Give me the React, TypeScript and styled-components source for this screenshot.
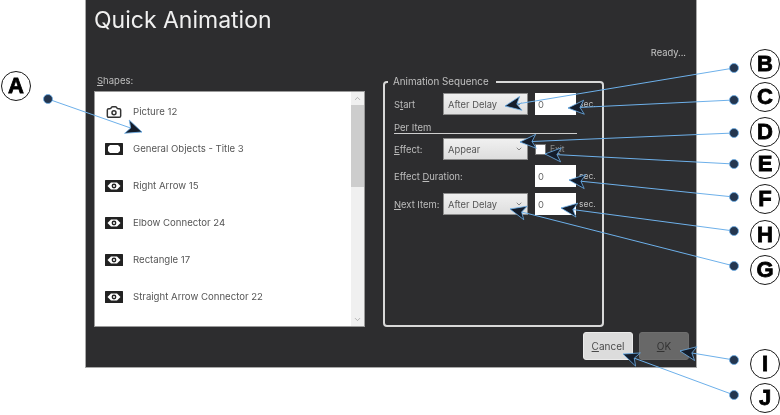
import React from 'react'
import styled, { createGlobalStyle } from 'styled-components'
import { ChevronDown, ChevronUp, Camera } from 'lucide-react'

const GlobalStyle = createGlobalStyle`
  html, body {
    margin: 0;
    padding: 0;
    background: #ffffff;
  }
  body {
    font-family: "Inter", "Liberation Sans", sans-serif;
  }
`

const Page = styled.div`
  position: relative;
  width: 780px;
  height: 415px;
  overflow: hidden;
  background: #ffffff;
  padding-left: 85px;
  box-sizing: border-box;
  filter: blur(0.4px);
`

const Dialog = styled.div`
  width: 612px;
  height: 368px;
  box-sizing: border-box;
  padding: 0 7px 7px 8px;
  display: flex;
  flex-direction: column;
  background: #2d2d2f;
  border: 1px solid #a9a9a9;
  border-top: none;
  color: #d0d0d0;
`

const Title = styled.h1`
  margin: 7px 0 0;
  font-size: 23px;
  line-height: 26px;
  font-weight: 400;
  color: #f0f0f0;
`

const Status = styled.div`
  align-self: flex-end;
  margin: 14px 3px 0 0;
  font-size: 9.3px;
  line-height: 11px;
  color: #c4c4c4;
`

const Columns = styled.div`
  display: flex;
  justify-content: space-between;
  align-items: flex-start;
  margin-top: 17px;
`

const LeftColumn = styled.div`
  width: 271px;
`

const SmallLabel = styled.div`
  padding-left: 3px;
  font-size: 9.5px;
  line-height: 12px;
  color: #bdbdbd;
  margin-bottom: 4px;
  u { text-underline-offset: 1px; }
`

const ListBox = styled.div`
  display: flex;
  height: 236px;
  box-sizing: border-box;
  background: #ffffff;
  border: 1px solid #9a9a9a;
`

const Rows = styled.ul`
  flex: 1;
  margin: 0;
  padding: 1px 0 0;
  list-style: none;
`

const Row = styled.li`
  height: 37px;
  display: flex;
  align-items: center;
  gap: 10px;
  padding-left: 10px;
  font-size: 9.6px;
  color: #555555;
`

const IconSlot = styled.span`
  width: 18px;
  display: flex;
  justify-content: center;
  color: #333333;
`

const Scrollbar = styled.div`
  width: 13px;
  display: flex;
  flex-direction: column;
  align-items: center;
  background: #f0f0f0;
  color: #a0a0a0;
`

const ScrollArrow = styled.div`
  height: 13px;
  display: flex;
  align-items: center;
  justify-content: center;
`

const ScrollThumb = styled.div`
  width: 100%;
  height: 82px;
  background: #cdcdcd;
`

const ScrollTrack = styled.div`
  flex: 1;
`

const GroupBox = styled.fieldset`
  width: 221px;
  min-width: 0;
  height: 251px;
  box-sizing: border-box;
  margin: 1px 85px 0 0;
  padding: 0 0 0 9px;
  border: 2px solid #d8d8d8;
  border-radius: 4px;
`

const GroupLegend = styled.legend`
  margin-left: -6px;
  padding: 0 7px 0 5px;
  font-size: 9.8px;
  line-height: 11px;
  color: #c0c0c0;
`

const FormRow = styled.div<{ $top: number }>`
  display: flex;
  align-items: center;
  margin-top: ${(p) => p.$top}px;
  height: 22px;
  font-size: 9.4px;
  color: #bdbdbd;
  u { text-underline-offset: 1px; }
`

const FieldLabel = styled.span<{ $width: number }>`
  width: ${(p) => p.$width}px;
  flex: none;
`

const Select = styled.div`
  width: 85px;
  height: 22px;
  box-sizing: border-box;
  flex: none;
  display: flex;
  align-items: center;
  justify-content: space-between;
  padding: 0 4px 0 4px;
  background: linear-gradient(#f0f0f0, #dedede);
  border: 1px solid #8c8c8c;
  font-size: 9.4px;
  color: #555555;
`

const NumberField = styled.div`
  width: 41px;
  height: 22px;
  box-sizing: border-box;
  flex: none;
  margin-left: 7px;
  padding-left: 3px;
  display: flex;
  align-items: center;
  background: #ffffff;
  font-size: 9.4px;
  color: #666666;
`

const Unit = styled.span`
  margin-left: 3px;
  font-size: 8.5px;
`

const SectionTitle = styled.div`
  width: 183px;
  margin-top: 7px;
  border-bottom: 1.5px solid #cfcfcf;
  font-size: 9.5px;
  line-height: 11px;
  color: #bdbdbd;
`

const CheckBox = styled.span`
  width: 11px;
  height: 11px;
  flex: none;
  margin-left: 7px;
  background: #ffffff;
  border: 1px solid #777777;
  box-sizing: border-box;
`

const CheckLabel = styled.span`
  margin-left: 4px;
  font-size: 8.5px;
  color: #8a8a8a;
`

const Footer = styled.div`
  margin-top: auto;
  display: flex;
  justify-content: flex-end;
  gap: 6px;
`

const Button = styled.div<{ $disabled?: boolean }>`
  width: 50px;
  height: 28px;
  display: flex;
  align-items: center;
  justify-content: center;
  border-radius: 3px;
  font-size: 10px;
  background: ${(p) => (p.$disabled ? '#686868' : '#dcdcdc')};
  border: 1px solid ${(p) => (p.$disabled ? '#6e6e6e' : '#ebebeb')};
  box-sizing: border-box;
  color: ${(p) => (p.$disabled ? '#333333' : '#4a4a4a')};
  u { text-underline-offset: 1px; }
`

const Overlay = styled.svg`
  position: absolute;
  inset: 0;
  pointer-events: none;
`

const Badge = styled.div<{ $x: number; $y: number }>`
  position: absolute;
  left: ${(p) => p.$x - 15}px;
  top: ${(p) => p.$y - 15}px;
  width: 30px;
  height: 30px;
  box-sizing: border-box;
  display: flex;
  align-items: center;
  justify-content: center;
  background: #ffffff;
  border: 1.5px solid #1a1a1a;
  border-radius: 50%;
  font-family: "Liberation Sans", sans-serif;
  font-size: 22px;
  font-weight: 700;
  -webkit-text-stroke: 0.8px #000000;
  color: #000000;
`

const EyeIcon = () => (
  <svg width="18" height="12" viewBox="0 0 18 12">
    <rect width="18" height="12" rx="0.5" fill="#222222" />
    <path d="M2.5 6 L6 2.5 H12 L15.5 6 L12 9.5 H6 Z" fill="#ffffff" />
    <circle cx="9" cy="6" r="2.4" fill="#222222" />
    <circle cx="9" cy="6" r="1" fill="#ffffff" />
  </svg>
)

const FrameIcon = () => (
  <svg width="18" height="12" viewBox="0 0 18 12">
    <rect width="18" height="12" rx="0.5" fill="#222222" />
    <path d="M3 4 L5 2 H13 L15 4 V8 L13 10 H5 L3 8 Z" fill="#ffffff" />
  </svg>
)

const shapes = [
  { name: 'Picture 12', icon: <Camera size={16} strokeWidth={2.2} /> },
  { name: 'General Objects - Title 3', icon: <FrameIcon /> },
  { name: 'Right Arrow 15', icon: <EyeIcon /> },
  { name: 'Elbow Connector 24', icon: <EyeIcon /> },
  { name: 'Rectangle 17', icon: <EyeIcon /> },
  { name: 'Straight Arrow Connector 22', icon: <EyeIcon /> },
]

// callouts: dot position, arrow tip, letter badge
const callouts = [
  { id: 'A', dot: [48, 99], tip: [142, 132], badge: [16, 86] },
  { id: 'B', dot: [734, 68], tip: [505, 106], badge: [765, 64] },
  { id: 'C', dot: [734, 100], tip: [568, 108], badge: [765, 97] },
  { id: 'D', dot: [734, 133], tip: [520, 142], badge: [765, 132] },
  { id: 'E', dot: [734, 164], tip: [545, 154], badge: [765, 164] },
  { id: 'F', dot: [734, 197], tip: [569, 180], badge: [765, 199] },
  { id: 'H', dot: [734, 231], tip: [561, 208], badge: [765, 235] },
  { id: 'G', dot: [734, 266], tip: [510, 209], badge: [765, 270] },
  { id: 'I', dot: [734, 360], tip: [680, 351], badge: [765, 364] },
  { id: 'J', dot: [734, 395], tip: [623, 354], badge: [765, 398] },
]

const arrowHead = (dot: number[], tip: number[]) => {
  const dx = dot[0] - tip[0]
  const dy = dot[1] - tip[1]
  const len = Math.hypot(dx, dy)
  const ux = dx / len
  const uy = dy / len
  const at = (along: number, side: number) =>
    `${tip[0] + ux * along - uy * side},${tip[1] + uy * along + ux * side}`
  return [at(0, 0), at(16, 7), at(12, 0), at(16, -7)].join(' ')
}

const App = () => (
  <Page>
    <GlobalStyle />
    <Dialog>
      <Title>Quick Animation</Title>
      <Status>Ready...</Status>
      <Columns>
        <LeftColumn>
          <SmallLabel>
            <u>S</u>hapes:
          </SmallLabel>
          <ListBox>
            <Rows>
              {shapes.map((s) => (
                <Row key={s.name}>
                  <IconSlot>{s.icon}</IconSlot>
                  {s.name}
                </Row>
              ))}
            </Rows>
            <Scrollbar>
              <ScrollArrow>
                <ChevronUp size={9} />
              </ScrollArrow>
              <ScrollThumb />
              <ScrollTrack />
              <ScrollArrow>
                <ChevronDown size={9} />
              </ScrollArrow>
            </Scrollbar>
          </ListBox>
        </LeftColumn>
        <GroupBox>
          <GroupLegend>Animation Sequence</GroupLegend>
          <FormRow $top={6}>
            <FieldLabel $width={49}>
              S<u>t</u>art
            </FieldLabel>
            <Select>
              After Delay
              <ChevronDown size={8} />
            </Select>
            <NumberField>0</NumberField>
            <Unit>sec.</Unit>
          </FormRow>
          <SectionTitle>Per Item</SectionTitle>
          <FormRow $top={4}>
            <FieldLabel $width={49}>
              <u>E</u>ffect:
            </FieldLabel>
            <Select>
              Appear
              <ChevronDown size={8} />
            </Select>
            <CheckBox />
            <CheckLabel>
              E<u>x</u>it
            </CheckLabel>
          </FormRow>
          <FormRow $top={5}>
            <FieldLabel $width={134}>
              Effect <u>D</u>uration:
            </FieldLabel>
            <NumberField>0</NumberField>
            <Unit>sec.</Unit>
          </FormRow>
          <FormRow $top={6}>
            <FieldLabel $width={49}>
              <u>N</u>ext Item:
            </FieldLabel>
            <Select>
              After Delay
              <ChevronDown size={8} />
            </Select>
            <NumberField>0</NumberField>
            <Unit>sec.</Unit>
          </FormRow>
        </GroupBox>
      </Columns>
      <Footer>
        <Button>
          <span>
            <u>C</u>ancel
          </span>
        </Button>
        <Button $disabled>
          <span>
            <u>O</u>K
          </span>
        </Button>
      </Footer>
    </Dialog>
    <Overlay width="780" height="415" viewBox="0 0 780 415">
      {callouts.map((c) => (
        <g key={c.id}>
          <line x1={c.dot[0]} y1={c.dot[1]} x2={c.tip[0]} y2={c.tip[1]} stroke="#6db0ea" strokeWidth="1" />
          <polygon points={arrowHead(c.dot, c.tip)} fill="#141d2b" stroke="#6db0ea" strokeWidth="0.8" />
          <circle cx={c.dot[0]} cy={c.dot[1]} r="4.5" fill="#24364f" stroke="#6db0ea" strokeWidth="0.8" />
        </g>
      ))}
    </Overlay>
    {callouts.map((c) => (
      <Badge key={c.id} $x={c.badge[0]} $y={c.badge[1]}>
        {c.id}
      </Badge>
    ))}
  </Page>
)

export default App
